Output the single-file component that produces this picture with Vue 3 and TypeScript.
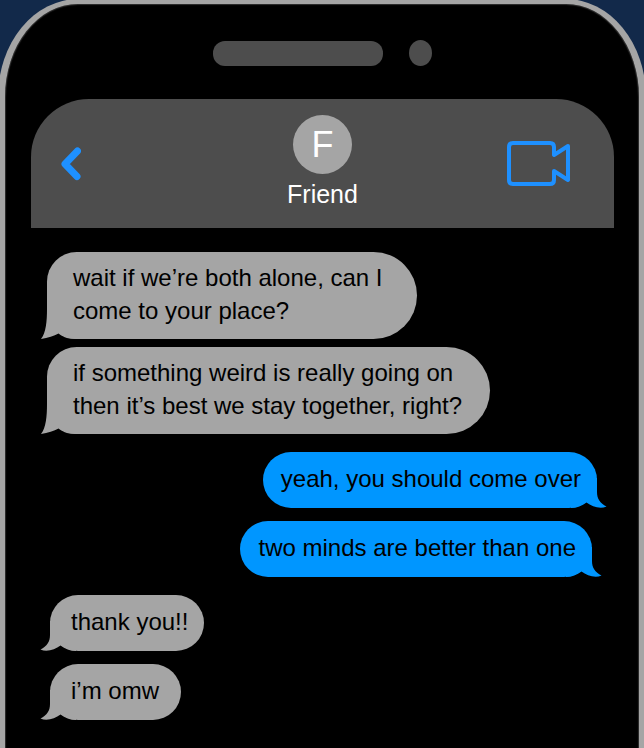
<script setup lang="ts">
type Side = 'received' | 'sent'

interface Message {
  id: number
  text: string
  size: 'short' | 'medium' | 'wide'
}

interface Run {
  id: number
  side: Side
  tall: boolean
  messages: Message[]
}

const contact = { name: 'Friend', initial: 'F' }

const runs: Run[] = [
  {
    id: 1,
    side: 'received',
    tall: true,
    messages: [
      { id: 1, text: 'wait if we’re both alone, can I come to your place?', size: 'medium' },
      { id: 2, text: 'if something weird is really going on then it’s best we stay together, right?', size: 'wide' },
    ],
  },
  {
    id: 2,
    side: 'sent',
    tall: false,
    messages: [
      { id: 3, text: 'yeah, you should come over', size: 'short' },
      { id: 4, text: 'two minds are better than one', size: 'short' },
    ],
  },
  {
    id: 3,
    side: 'received',
    tall: false,
    messages: [
      { id: 5, text: 'thank you!!', size: 'short' },
      { id: 6, text: 'i’m omw', size: 'short' },
    ],
  },
]

const tallTail = 'M7 0C7 12 6 24 1 30C8 29 14 27 18.5 24.5C22 27 26 30 36 30V0Z'
const shortTail = 'M10 0V14C10 21 7 25 .5 28.5C7 31.5 15 28.5 20.5 24.5C25 28 30 30 36 30V0Z'
</script>

<template>
  <div class="stage">
    <main class="phone">
      <div class="notch">
        <span class="speaker"></span>
        <span class="camera"></span>
      </div>

      <header class="bar">
        <button class="icon-button" type="button" aria-label="Back">
          <svg width="20" height="34" viewBox="0 0 20 34" fill="none" stroke="currentColor" stroke-width="7" stroke-linecap="round" stroke-linejoin="round">
            <path d="M16.5 4L4 17L16 29.5" />
          </svg>
        </button>
        <div class="contact">
          <span class="avatar">{{ contact.initial }}</span>
          <h1 class="name">{{ contact.name }}</h1>
        </div>
        <button class="icon-button video" type="button" aria-label="Video call">
          <svg width="63" height="45" viewBox="0 0 63 45" fill="none" stroke="currentColor" stroke-width="4" stroke-linecap="round" stroke-linejoin="round">
            <path d="M47 14V6Q47 2 43 2H6Q2 2 2 6V39Q2 43 6 43H43Q47 43 47 39V30L61 39V5Z" />
          </svg>
        </button>
      </header>

      <section class="thread" aria-label="Messages">
        <div v-for="run in runs" :key="run.id" class="run" :class="[run.side, { tall: run.tall }]">
          <p v-for="message in run.messages" :key="message.id" class="bubble" :class="message.size">
            {{ message.text }}
            <svg class="tail" width="36" height="30" viewBox="0 0 36 30" fill="currentColor" aria-hidden="true">
              <path :d="run.tall ? tallTail : shortTail" />
            </svg>
          </p>
        </div>
      </section>
    </main>
  </div>
</template>

<style>
body {
  margin: 0;
  background: #12294a;
}
</style>

<style scoped>
.stage {
  display: flex;
  box-sizing: border-box;
  min-height: 100vh;
  overflow: hidden;
  background: #12294a;
  font-family: "Liberation Sans", Arial, sans-serif;
}

.phone {
  flex: 1;
  box-sizing: border-box;
  margin: -1px -2px -4px;
  padding: 35px 24px 24px;
  border: solid #a5a5a5;
  border-width: 5px 7px 0;
  border-radius: 80px 80px 0 0 / 98px 98px 0 0;
  background: #000;
  box-shadow: inset 0 0 1px 1px #303030;
}

.notch {
  display: flex;
  align-items: center;
  justify-content: center;
  gap: 26px;
  padding-top: 1px;
}

.speaker {
  width: 170px;
  height: 25px;
  border-radius: 12px;
  background: #4d4d4d;
}

.camera {
  width: 23px;
  height: 26px;
  border-radius: 50%;
  background: #4d4d4d;
}

.bar {
  display: grid;
  grid-template-columns: 1fr auto 1fr;
  align-items: center;
  box-sizing: border-box;
  height: 129px;
  margin: 33px 1px 0 2px;
  padding: 0 44px 0 30px;
  border-radius: 58px 58px 0 0;
  background: #4d4d4d;
  color: #fff;
}

.icon-button {
  display: flex;
  justify-self: start;
  padding: 0;
  border: 0;
  background: none;
  color: #1e90ff;
  cursor: pointer;
}

.video {
  justify-self: end;
}

.contact {
  display: flex;
  flex-direction: column;
  align-items: center;
  gap: 6px;
  margin-left: 14px;
  padding-bottom: 4px;
}

.avatar {
  display: flex;
  align-items: center;
  justify-content: center;
  width: 59px;
  height: 59px;
  border-radius: 50%;
  background: #a5a5a5;
  font-size: 36px;
}

.name {
  margin: 0;
  font-size: 25px;
  font-weight: 400;
  line-height: 28px;
}

.thread {
  display: flex;
  flex-direction: column;
  gap: 18px;
  padding-top: 24px;
}

.run {
  display: flex;
  flex-direction: column;
  gap: 13px;
}

.run.tall {
  gap: 8px;
}

.run.received {
  align-items: flex-start;
  padding-left: 21px;
  color: #a5a5a5;
}

.run.received.tall {
  padding-left: 18px;
}

.run.sent {
  align-items: flex-end;
  padding-right: 18px;
  color: #0096ff;
}

.bubble {
  position: relative;
  isolation: isolate;
  box-sizing: border-box;
  min-width: 131px;
  margin: 0;
  padding: 10px 16px 13px 21px;
  border-radius: 28px;
  background: currentColor;
  font-size: 24px;
  line-height: 33px;
  -webkit-text-fill-color: #000;
}

.tall .bubble {
  padding: 9px 24px 12px 26px;
  border-radius: 30px 44px 44px 30px;
}

.bubble.medium {
  max-width: 370px;
}

.bubble.wide {
  max-width: 443px;
}

.sent .bubble {
  padding: 10px 16px 13px 18px;
}

.sent .bubble + .bubble {
  margin-right: 5px;
}

.tail {
  position: absolute;
  z-index: -1;
  bottom: 0;
  left: -10px;
}

.tall .tail {
  left: -7px;
}

.sent .tail {
  right: -10px;
  left: auto;
  transform: scaleX(-1);
}
</style>
